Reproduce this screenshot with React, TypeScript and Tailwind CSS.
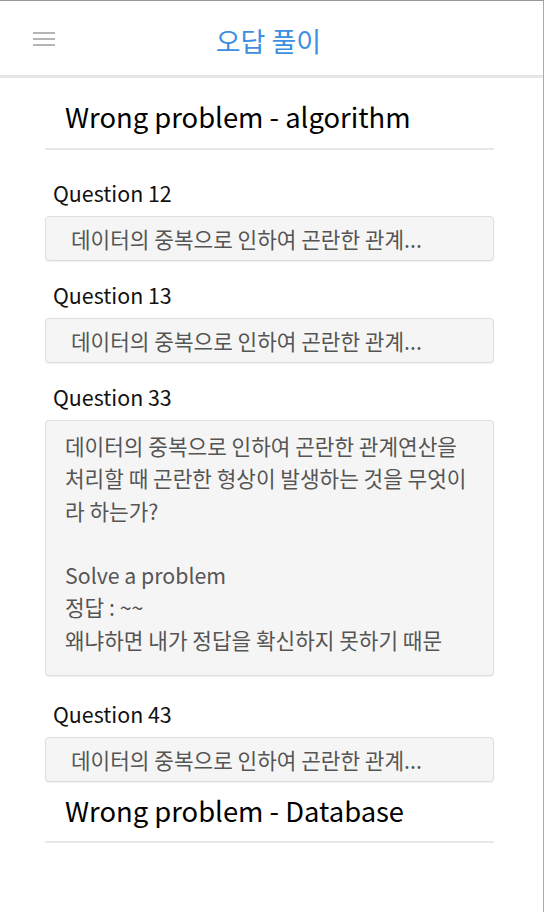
import React from "react";

const font = { fontFamily: '"Noto Sans CJK KR", "Noto Sans", sans-serif' };

const preview = "데이터의 중복으로 인하여 곤란한 관계...";

function Label({ children }: { children: React.ReactNode }) {
  return <div className="text-[21.4px] leading-[28px] text-[#111] pl-[8px]">{children}</div>;
}

function Collapsed({ label, className }: { label: string; className: string }) {
  return (
    <div className={className}>
      <Label>{label}</Label>
      <div className="mt-[9px] h-[45px] rounded-[4px] border border-[#dedede] bg-[#f5f5f5] shadow-[0_1px_1px_rgba(0,0,0,0.06)] pl-[25px] flex items-center text-[21.33px] text-[#555] whitespace-nowrap overflow-hidden">
        {preview}
      </div>
    </div>
  );
}

export default function App() {
  return (
    <div style={font} className="w-[544px] h-[912px] bg-white border-t border-t-[#999] border-r border-r-[#aaa] overflow-hidden">
      <header className="relative h-[77px] border-b-[3px] border-b-[#e6e6e6] flex items-center justify-center">
        <div className="absolute left-[33px] top-[31px] flex flex-col gap-[4px]">
          <span className="block w-[22px] h-[2px] bg-[#b5b5b5]" />
          <span className="block w-[22px] h-[2px] bg-[#b5b5b5]" />
          <span className="block w-[22px] h-[2px] bg-[#b5b5b5]" />
        </div>
        <h1 className="text-[27px] text-[#3d8fe0] mr-[6px] mt-[6px]">오답 풀이</h1>
      </header>

      <main className="px-[45px] pr-[49px] flex flex-col">
        <h2 className="pt-[19px] pb-[13px] pl-[20px] text-[27.4px] leading-[38px] text-black border-b-2 border-b-[#e8e8e8]">
          Wrong problem - algorithm
        </h2>
        <div className="pt-[29px] flex flex-col">
          <Collapsed label="Question 12" className="" />
          <Collapsed label="Question 13" className="mt-[20px]" />
          <div className="mt-[20px]">
            <Label>Question 33</Label>
            <div className="mt-[9px] h-[256px] rounded-[4px] border border-[#dedede] bg-[#f5f5f5] shadow-[0_1px_1px_rgba(0,0,0,0.06)] pl-[19px] pr-[20px] pt-[9px] text-[21.33px] leading-[32.3px] text-[#555]">
              <p>데이터의 중복으로 인하여 곤란한 관계연산을 처리할 때 곤란한 형상이 발생하는 것을 무엇이라 하는가?</p>
              <p>&nbsp;</p>
              <p>Solve a problem</p>
              <p>정답 : ~~</p>
              <p>왜냐하면 내가 정답을 확신하지 못하기 때문</p>
            </div>
          </div>
          <Collapsed label="Question 43" className="mt-[24px]" />
        </div>
        <h2 className="pt-[9px] pb-[12px] pl-[20px] text-[27.4px] leading-[38px] text-black border-b-2 border-b-[#e8e8e8]">
          Wrong problem - Database
        </h2>
      </main>
    </div>
  );
}
